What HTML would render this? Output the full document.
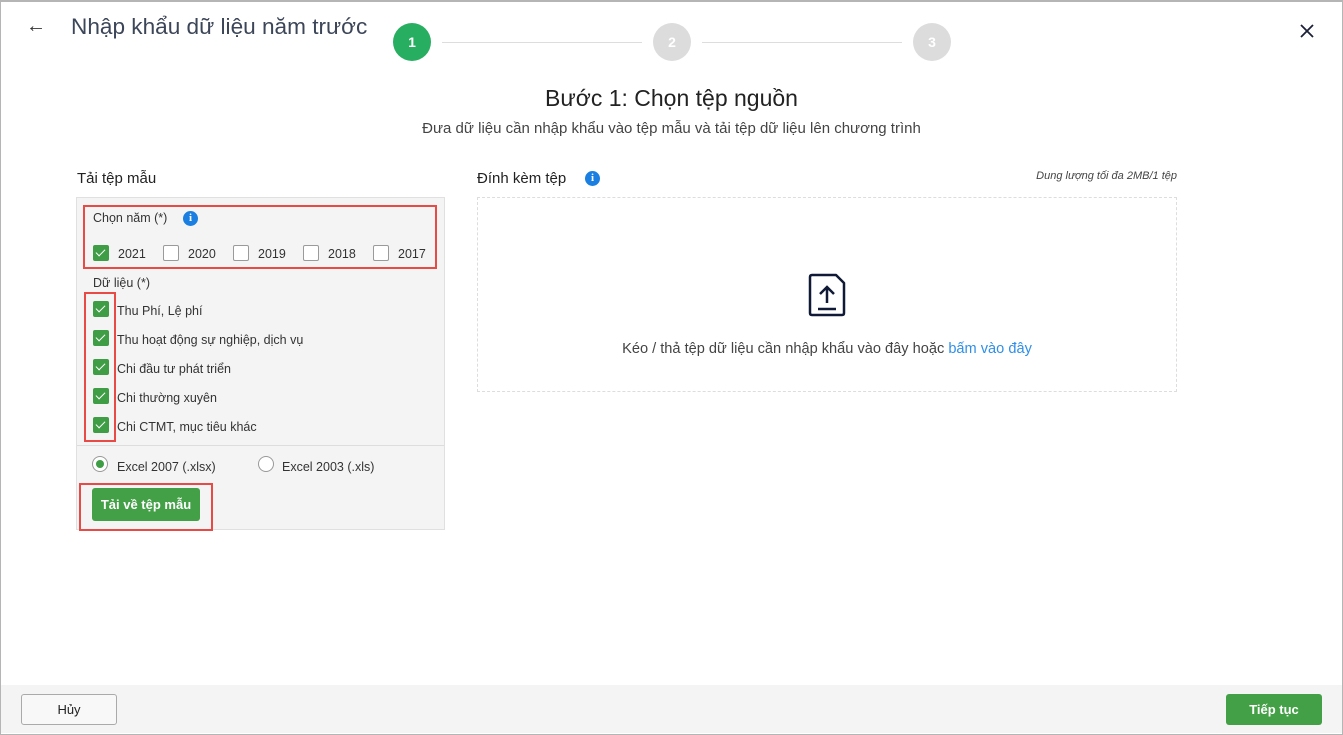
<!DOCTYPE html>
<html><head><meta charset="utf-8"><style>
*{box-sizing:border-box;margin:0;padding:0}
body{width:1343px;height:735px;position:relative;background:#fff;font-family:"Liberation Sans",sans-serif;color:#333;overflow:hidden}
.frame{position:absolute;left:0;top:0;width:1343px;height:735px;border:1px solid #b5b5b5;border-top:2px solid #b5b5b5}
.a{position:absolute}
.cb{position:absolute;width:16px;height:16px;border-radius:2px}
.on{background:#3f9d45}
.on::after{content:"";position:absolute;left:5px;top:2px;width:4px;height:8px;border:solid #fff;border-width:0 1.5px 1.5px 0;transform:rotate(45deg)}
.off{background:#fff;border:1px solid #9a9a9a}
.t{position:absolute;font-size:12.5px;color:#333;white-space:nowrap}
.step{position:absolute;width:38px;height:38px;border-radius:50%;color:#fff;font-weight:bold;font-size:14px;text-align:center;line-height:38px}
.red{position:absolute;border:2px solid #e84a45}
.info{position:absolute;width:15px;height:15px;border-radius:50%;background:#1a7fe0;color:#fff;font-size:11px;font-weight:bold;text-align:center;line-height:15px;font-family:"Liberation Serif",serif}
</style></head><body>
<div class="frame"></div>
<div class="a" style="left:26px;top:15px;font-size:20px;color:#333">←</div>
<div class="a" style="left:71px;top:14px;font-size:22.6px;color:#3c4658">Nhập khẩu dữ liệu năm trước</div>
<div class="step" style="left:393px;top:23px;background:#27ae60">1</div>
<div class="a" style="left:442px;top:42px;width:200px;height:1px;background:#ddd"></div>
<div class="step" style="left:653px;top:23px;background:#dcdcdc">2</div>
<div class="a" style="left:702px;top:42px;width:200px;height:1px;background:#ddd"></div>
<div class="step" style="left:913px;top:23px;background:#dcdcdc">3</div>
<svg class="a" style="left:1299px;top:23px" width="16" height="16"><path d="M2 2L14 14M14 2L2 14" stroke="#1b2036" stroke-width="1.8"/></svg>
<div class="a" style="left:0;width:1343px;top:85px;text-align:center;font-size:23px;color:#222">Bước 1: Chọn tệp nguồn</div>
<div class="a" style="left:0;width:1343px;top:120px;text-align:center;font-size:15px;color:#444">Đưa dữ liệu cần nhập khẩu vào tệp mẫu và tải tệp dữ liệu lên chương trình</div>
<div class="a" style="left:77px;top:170px;font-size:15px;color:#222">Tải tệp mẫu</div>
<div class="a" style="left:76px;top:197px;width:369px;height:333px;background:#f4f4f4;border:1px solid #e0e0e0"></div>
<div class="a" style="left:77px;top:445px;width:367px;height:1px;background:#ddd"></div>
<div class="red" style="left:83px;top:205px;width:354px;height:64px"></div>
<div class="t" style="left:93px;top:211px">Chọn năm (*)</div>
<div class="info" style="left:183px;top:211px">i</div>
<div class="cb on" style="left:93px;top:245px"></div><div class="t" style="left:118px;top:247px">2021</div>
<div class="cb off" style="left:163px;top:245px"></div><div class="t" style="left:188px;top:247px">2020</div>
<div class="cb off" style="left:233px;top:245px"></div><div class="t" style="left:258px;top:247px">2019</div>
<div class="cb off" style="left:303px;top:245px"></div><div class="t" style="left:328px;top:247px">2018</div>
<div class="cb off" style="left:373px;top:245px"></div><div class="t" style="left:398px;top:247px">2017</div>
<div class="t" style="left:93px;top:276px">Dữ liệu (*)</div>
<div class="red" style="left:84px;top:292px;width:32px;height:150px"></div>
<div class="cb on" style="left:93px;top:301px"></div><div class="t" style="left:117px;top:304px">Thu Phí, Lệ phí</div>
<div class="cb on" style="left:93px;top:330px"></div><div class="t" style="left:117px;top:333px">Thu hoạt động sự nghiệp, dịch vụ</div>
<div class="cb on" style="left:93px;top:359px"></div><div class="t" style="left:117px;top:362px">Chi đầu tư phát triển</div>
<div class="cb on" style="left:93px;top:388px"></div><div class="t" style="left:117px;top:391px">Chi thường xuyên</div>
<div class="cb on" style="left:93px;top:417px"></div><div class="t" style="left:117px;top:420px">Chi CTMT, mục tiêu khác</div>
<div class="a" style="left:92px;top:456px;width:16px;height:16px;border-radius:50%;border:1px solid #999;background:#fff"><div style="position:absolute;left:3px;top:3px;width:8px;height:8px;border-radius:50%;background:#3f9d45"></div></div>
<div class="t" style="left:117px;top:460px">Excel 2007 (.xlsx)</div>
<div class="a" style="left:258px;top:456px;width:16px;height:16px;border-radius:50%;border:1px solid #999;background:#fff"></div>
<div class="t" style="left:282px;top:460px">Excel 2003 (.xls)</div>
<div class="red" style="left:79px;top:483px;width:134px;height:48px"></div>
<div class="a" style="left:92px;top:488px;width:108px;height:33px;background:#43a047;border-radius:3px;color:#fff;font-weight:bold;font-size:13px;text-align:center;line-height:33px">Tải về tệp mẫu</div>
<div class="a" style="left:477px;top:170px;font-size:15px;color:#222">Đính kèm tệp</div>
<div class="info" style="left:585px;top:171px">i</div>
<div class="a" style="left:1000px;top:170px;width:177px;text-align:right;font-size:11px;font-style:italic;color:#444">Dung lượng tối đa 2MB/1 tệp</div>
<div class="a" style="left:477px;top:197px;width:700px;height:195px;border:1px dashed #ddd"></div>
<svg class="a" style="left:806px;top:272px" width="42" height="46"><path d="M4 5Q4 3 6 3H30L38 11V41Q38 43 36 43H6Q4 43 4 41Z" fill="none" stroke="#101a36" stroke-width="2.5" stroke-linejoin="round"/><path d="M21 31V16M14 22L21 15L28 22M12 37H30" fill="none" stroke="#101a36" stroke-width="2.5"/></svg>
<div class="a" style="left:0;width:1654px;top:341px;text-align:center;font-size:14.6px;color:#444">Kéo / thả tệp dữ liệu cần nhập khẩu vào đây hoặc <span style="color:#2f8fe8">bấm vào đây</span></div>
<div class="a" style="left:1px;top:685px;width:1341px;height:48px;background:#f4f4f4"></div>
<div class="a" style="left:21px;top:694px;width:96px;height:31px;border:1px solid #aaa;border-radius:3px;background:#f8f8f8;text-align:center;line-height:29px;font-size:13px;color:#222">Hủy</div>
<div class="a" style="left:1226px;top:694px;width:96px;height:31px;background:#43a047;border-radius:3px;text-align:center;line-height:31px;font-size:13px;color:#fff;font-weight:bold">Tiếp tục</div>
</body></html>
